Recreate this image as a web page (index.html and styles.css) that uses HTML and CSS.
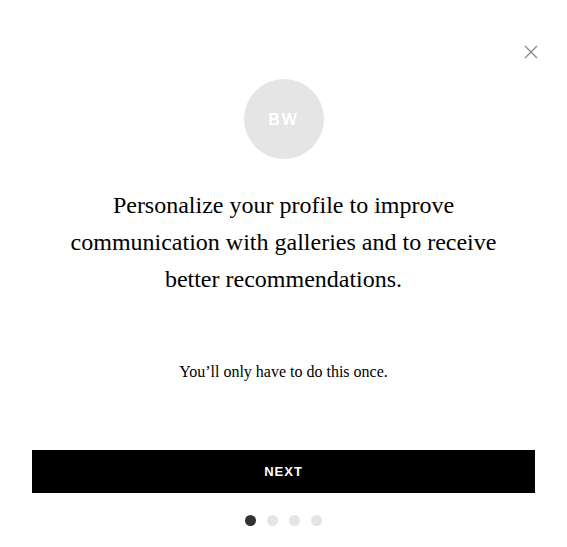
FILE: index.html
```html
<!DOCTYPE html>
<html>
<head>
<meta charset="utf-8">
<link rel="stylesheet" href="styles.css">
</head>
<body>
<div class="modal">
  <button class="close" aria-label="Close">
    <svg width="14" height="14" viewBox="0 0 14 14"><path d="M1 1L13 13M13 1L1 13" stroke="#888" stroke-width="1.3" fill="none"/></svg>
  </button>
  <div class="avatar">BW</div>
  <h1 class="title">Personalize your profile to improve communication with galleries and to receive better recommendations.</h1>
  <p class="note">You’ll only have to do this once.</p>
  <button class="next">NEXT</button>
  <div class="dots">
    <span class="dot active"></span>
    <span class="dot"></span>
    <span class="dot"></span>
    <span class="dot"></span>
  </div>
</div>
</body>
</html>
```
FILE: styles.css
```css
html, body { margin: 0; padding: 0; background: #fff; }
.modal {
  position: relative;
  width: 567px;
  height: 547px;
  box-sizing: border-box;
  padding: 79px 32px 0;
  display: flex;
  flex-direction: column;
  align-items: center;
}
.close {
  position: absolute;
  top: 45px;
  right: 29px;
  border: 0;
  background: none;
  padding: 0;
  width: 14px;
  height: 14px;
  cursor: pointer;
}
.close svg { display: block; }
.avatar {
  width: 80px;
  height: 80px;
  border-radius: 50%;
  background: #e5e5e5;
  color: #fff;
  font-family: "Liberation Sans", Arial, sans-serif;
  font-weight: bold;
  font-size: 16px;
  letter-spacing: 2px;
  padding-top: 2px;
  box-sizing: border-box;
  display: flex;
  align-items: center;
  justify-content: center;
}
.title {
  margin: 28px 0 0;
  font-family: "Liberation Serif", "Times New Roman", serif;
  font-weight: normal;
  font-size: 24px;
  line-height: 37px;
  text-align: center;
  color: #000;
  width: 440px;
}
.note {
  margin: 62px 0 0;
  font-family: "Liberation Serif", "Times New Roman", serif;
  font-size: 16px;
  line-height: 24px;
  color: #000;
}
.next {
  margin-top: 66px;
  width: 503px;
  height: 43px;
  border: 0;
  background: #000;
  color: #fff;
  font-family: "Liberation Sans", Arial, sans-serif;
  font-weight: bold;
  font-size: 13px;
  letter-spacing: 1px;
  padding: 0;
}
.dots {
  margin-top: 22px;
  display: flex;
  gap: 11px;
}
.dot {
  width: 11px;
  height: 11px;
  border-radius: 50%;
  background: #e5e5e5;
}
.dot.active { background: #333; }
```
